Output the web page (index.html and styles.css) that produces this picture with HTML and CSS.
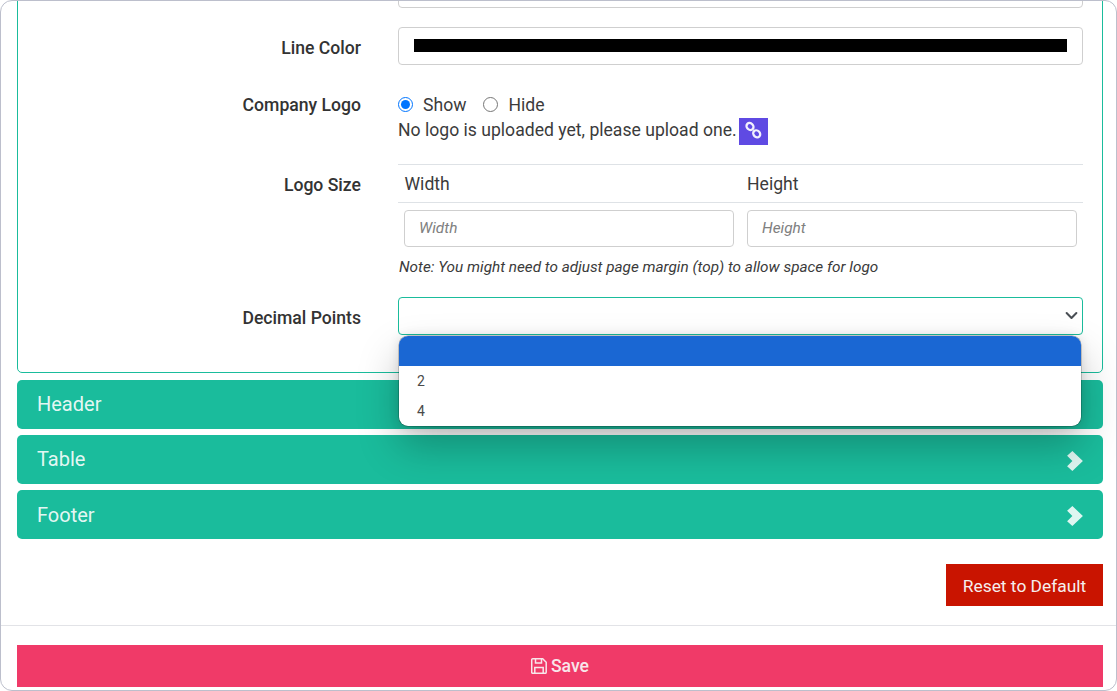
FILE: index.html
```html
<!DOCTYPE html>
<html lang="en">
<head>
<meta charset="utf-8">
<title>Settings</title>
<link rel="stylesheet" href="styles.css">
</head>
<body>
<div class="frame">
  <div class="content">
    <section class="panel">
      <div class="row">
        <label class="row-label"></label>
        <input class="control" type="text">
      </div>
      <div class="row">
        <label class="row-label">Line Color</label>
        <input class="control color" type="color" value="#000000">
      </div>
      <div class="row">
        <label class="row-label">Company Logo</label>
        <div>
          <div class="radios">
            <label class="radio"><input type="radio" name="logo" checked>Show</label>
            <label class="radio"><input type="radio" name="logo">Hide</label>
          </div>
          <div class="upload-line">
            <span>No logo is uploaded yet, please upload one.</span>
            <a class="link-btn" href="#" aria-label="Upload logo">
              <svg width="29" height="27" viewBox="0 0 29 27" fill="none" stroke="#f2f0fd" stroke-width="2.300"><ellipse cx="11" cy="8.500" rx="3.800" ry="3.200" transform="rotate(45 11 8.500)"/><ellipse cx="17.700" cy="15.800" rx="3.800" ry="3.200" transform="rotate(45 17.700 15.800)"/></svg>
            </a>
          </div>
        </div>
      </div>
      <div class="row">
        <label class="row-label">Logo Size</label>
        <div>
          <table class="size-table">
            <thead>
              <tr><th>Width</th><th>Height</th></tr>
            </thead>
            <tbody>
              <tr>
                <td><input class="control small" type="text" placeholder="Width"></td>
                <td><input class="control small" type="text" placeholder="Height"></td>
              </tr>
            </tbody>
          </table>
          <p class="note">Note: You might need to adjust page margin (top) to allow space for logo</p>
        </div>
      </div>
      <div class="row">
        <label class="row-label">Decimal Points</label>
        <div class="select-wrap">
          <div class="select-box">
            <svg class="select-arrow" width="13" height="13" viewBox="0 0 16 16" fill="none" stroke="#4a4f55" stroke-width="2.500" stroke-linecap="round" stroke-linejoin="round"><path d="m2 5 6 6 6-6"/></svg>
          </div>
          <ul class="options">
            <li class="option selected">&nbsp;</li>
            <li class="option">2</li>
            <li class="option">4</li>
          </ul>
        </div>
      </div>
    </section>
    <div class="bar bar-up">Header</div>
    <div class="bar bar-up">Table<svg class="chev" width="16" height="20" viewBox="0 0 15 19"><path d="M5 0 15 9.500 5 19 0 14.500 5 9.500 0 4.500Z"/></svg></div>
    <div class="bar">Footer<svg class="chev" width="16" height="20" viewBox="0 0 15 19"><path d="M5 0 15 9.500 5 19 0 14.500 5 9.500 0 4.500Z"/></svg></div>
    <div class="actions"><button class="reset" type="button">Reset to Default</button></div>
  </div>
  <footer class="foot">
    <button class="save" type="button">
      <svg width="16" height="16" viewBox="0 0 16 16" fill="none" stroke="currentColor" stroke-width="1.500"><path d="M1.700.8h10l3.500 3.500v10a1 1 0 0 1-1 1H1.700a1 1 0 0 1-1-1V1.800a1 1 0 0 1 1-1Z"/><path d="M4.500 1v4h6V1"/><path d="M3.800 15V9.500h8.400V15"/></svg>
      Save
    </button>
  </footer>
</div>
</body>
</html>
```
FILE: styles.css
```css
* { box-sizing: border-box; }

html, body { margin: 0; padding: 0; background: #fff; }

body {
  font-family: Roboto, "Liberation Sans", sans-serif;
  font-size: 17.6px;
  line-height: 24px;
  color: #3b3b3b;
}

.frame {
  width: 1117px;
  height: 691px;
  border: 1px solid #bcbfcc;
  border-radius: 12px;
  overflow: hidden;
  display: flex;
  flex-direction: column;
  background: #fff;
}

.content {
  padding: 0 13px 0 16px;
  flex: none;
}

.panel {
  margin-top: -40px;
  padding: 8px 19px 18px 0;
  border: 1px solid #1abc9c;
  border-radius: 5px;
}

.row {
  display: grid;
  grid-template-columns: 343px 685px;
  column-gap: 37px;
  margin-bottom: 19px;
}

.row-label {
  padding-top: 9px;
  text-align: right;
  font-size: 17.6px;
  font-weight: 500;
  color: #333;
}

.control {
  display: block;
  width: 100%;
  height: 38px;
  border: 1px solid #cfcfcf;
  border-radius: 4px;
  background: #fff;
  font: inherit;
}

.color {
  padding: 11px 15px 12px;
}

.color::-webkit-color-swatch-wrapper { padding: 0; }
.color::-webkit-color-swatch { border: 0; border-radius: 0; background: #000; }

.radios {
  display: flex;
  gap: 17px;
  padding-top: 9px;
  height: 32px;
}

.radio {
  display: flex;
  align-items: center;
  gap: 10px;
}

.radio input {
  width: 15px;
  height: 15px;
  margin: 0;
}

.upload-line {
  display: flex;
  gap: 2px;
  margin-top: 2px;
  height: 27px;
}

.link-btn {
  width: 29px;
  height: 27px;
  display: block;
  background: #5f4ae3;
}

.link-btn svg { display: block; }

.size-table {
  width: 100%;
  border-collapse: collapse;
  table-layout: fixed;
}

.size-table th {
  padding: 6px 6.500px;
  height: 38px;
  border-top: 1px solid #dee2e6;
  border-bottom: 1px solid #dee2e6;
  font-weight: 400;
  text-align: left;
}

.size-table td {
  padding: 7px 6.500px;
}

.size-table td:first-child {
  padding-left: 6px;
}

.small {
  height: 37px;
  padding: 0 14px 2px;
  font-size: 15.400px;
}

.small::placeholder {
  font-style: italic;
  color: #808080;
  opacity: 1;
}

.note {
  margin: 3px 0 0;
  padding-left: 1px;
  font-size: 15.300px;
  line-height: 21px;
  font-style: italic;
}

.select-wrap { position: relative; }

.select-box {
  height: 38px;
  border: 1px solid #1abc9c;
  border-radius: 4px;
  background: #fff;
}

.select-arrow {
  position: absolute;
  right: 5px;
  top: 12px;
}

.options {
  position: absolute;
  top: 39px;
  left: 1px;
  right: 2px;
  margin: 0;
  padding: 0;
  list-style: none;
  border-radius: 9px;
  overflow: hidden;
  background: #fff;
  box-shadow: 0 0 0 0.5px rgba(0, 0, 0, .35), 0 0 12px rgba(0, 0, 0, .12), 0 20px 40px rgba(0, 0, 0, .25);
  z-index: 2;
  font-size: 14px;
  color: #4a4a4a;
}

.option {
  height: 30px;
  line-height: 30px;
  padding-left: 18px;
}

.selected { background: #1a67d3; }

.bar {
  height: 49px;
  margin-top: 6px;
  padding: 0 20px;
  display: flex;
  align-items: center;
  justify-content: space-between;
  border-radius: 5px;
  background: #1abc9c;
  color: rgba(255, 255, 255, .9);
  font-size: 20px;
}

.bar-up { padding-bottom: 2px; }

.panel + .bar { margin-top: 7px; }

.chev {
  fill: rgba(255, 255, 255, .86);
  margin-top: 3px;
}

.bar-up .chev { margin-top: 5px; }

.actions {
  display: flex;
  justify-content: flex-end;
  margin-top: 25px;
  padding-bottom: 19px;
}

.reset {
  width: 157px;
  height: 42px;
  padding: 1px 0 0;
  border: 0;
  background: #c91400;
  color: #f5eeee;
  font: 400 17.400px Roboto, "Liberation Sans", sans-serif;
}

.foot {
  border-top: 1px solid #e2e3e7;
  padding: 19px 13px 0 16px;
}

.save {
  width: 1086px;
  height: 42px;
  border: 0;
  display: flex;
  align-items: center;
  justify-content: center;
  gap: 4px;
  background: #f03a68;
  color: #f8e6ea;
  font: 500 17.600px Roboto, "Liberation Sans", sans-serif;
}
```
